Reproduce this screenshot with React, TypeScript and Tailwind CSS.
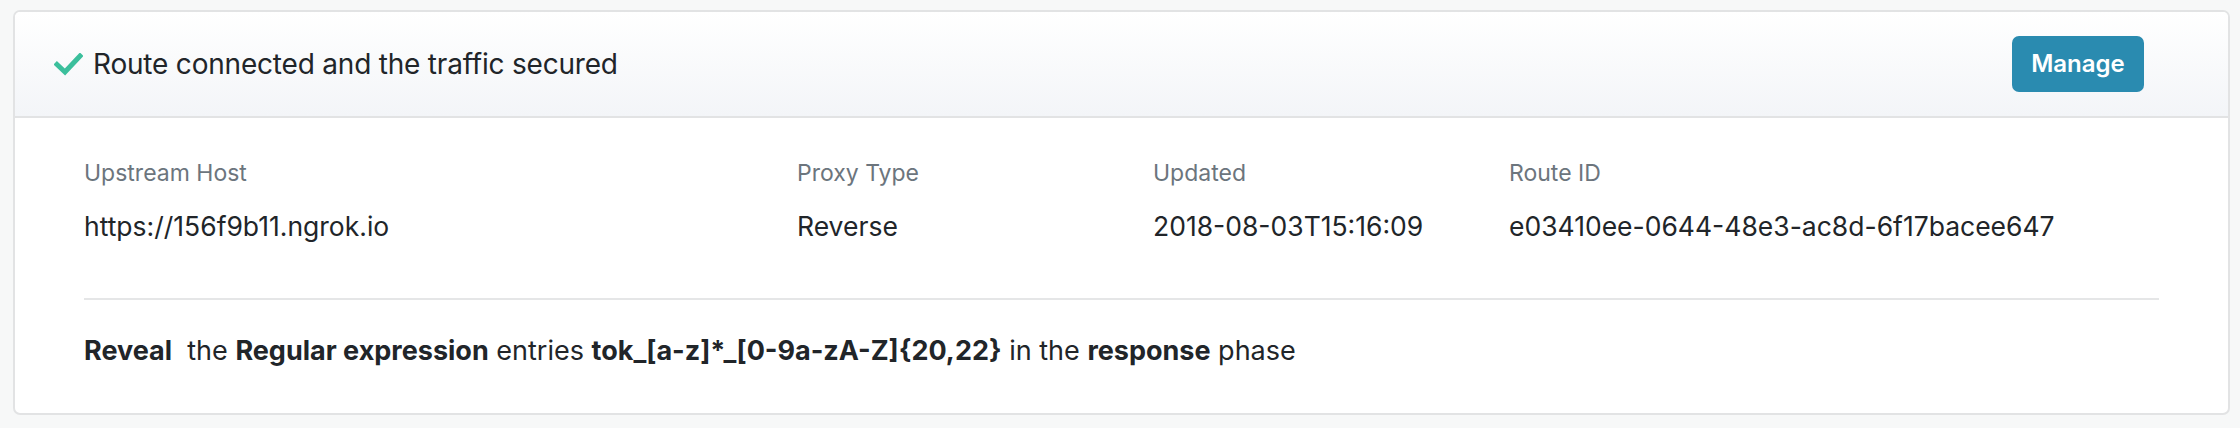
import React from 'react';

const fields = [
  { label: 'Upstream Host', value: 'https://156f9b11.ngrok.io' },
  { label: 'Proxy Type', value: 'Reverse' },
  { label: 'Updated', value: '2018-08-03T15:16:09' },
  { label: 'Route ID', value: 'e03410ee-0644-48e3-ac8d-6f17bacee647' },
];

const CheckIcon = () => (
  <svg width="29" height="23" viewBox="0 0 29 23" fill="none">
    <path d="M3 11.5 L11 19 L26 3" stroke="#3bbf9c" strokeWidth="5" strokeLinecap="square" />
  </svg>
);

export default function App() {
  return (
    <div
      className="min-h-screen bg-[#f7f8f8] pl-[13px] pr-[10px] pt-[10px] pb-[11px]"
      style={{ fontFamily: 'Inter, "Noto Sans", sans-serif' }}
    >
      <div className="rounded-[7px] border-2 border-[#e2e3e4] bg-white overflow-hidden">
        {/* header */}
        <div className="flex items-center justify-between h-[106px] pl-[39px] pr-[84px] border-b-2 border-[#e2e3e4] bg-gradient-to-b from-white to-[#f3f5f8]">
          <div className="flex items-center gap-[10px]">
            <CheckIcon />
            <span className="text-[28px] text-[#212529] tracking-[-0.2px]">Route connected and the traffic secured</span>
          </div>
          <button className="w-[132px] h-[56px] rounded-[7px] bg-[#2a8bb0] text-white text-[24px] font-semibold">
            Manage
          </button>
        </div>

        {/* body */}
        <div className="px-[69px] pt-[40px] pb-[45px]">
          <div className="grid grid-cols-[713px_356px_356px_1fr] pb-[55px] border-b-2 border-[#e5e6e7]">
            {fields.map((f) => (
              <div key={f.label} className="flex flex-col">
                <span className="text-[23px] leading-[30px] text-[#6c757d]">{f.label}</span>
                <span className="mt-[21px] text-[26.5px] leading-[34px] text-[#212529]">{f.value}</span>
              </div>
            ))}
          </div>
          <p className="pt-[34px] text-[27px] leading-[34px] text-[#212529]">
            <b className="font-bold">Reveal</b>&nbsp; the <b className="font-bold">Regular expression</b> entries{' '}
            <b className="font-bold">tok_[a-z]*_[0-9a-zA-Z]{'{20,22}'}</b> in the <b className="font-bold">response</b> phase
          </p>
        </div>
      </div>
    </div>
  );
}
